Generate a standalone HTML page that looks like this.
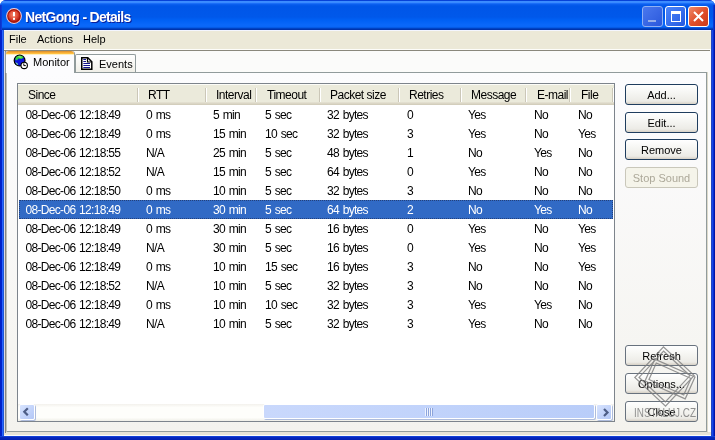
<!DOCTYPE html>
<html><head><meta charset="utf-8">
<style>
*{margin:0;padding:0;box-sizing:border-box}
html,body{width:715px;height:440px;overflow:hidden;-webkit-font-smoothing:antialiased;background:#fff;font-family:"Liberation Sans",sans-serif;font-size:11px;color:#000}
.a{position:absolute}
#frame{will-change:transform;position:absolute;left:0;top:0;width:715px;height:440px;background:#0831D9;border-radius:6px 6px 0 0;overflow:hidden}
#title{position:absolute;left:0;top:0;width:715px;height:30px;background:linear-gradient(to bottom,#0742d8 0px,#0742d8 0.8px,#3d8eff 1px,#3a8aff 2.5px,#1a6ef8 3.5px,#0a5eee 4.5px,#0056e8 6px,#0058ea 17px,#0060f4 20px,#0a68fa 25px,#0a66f6 27px,#0050d8 28px,#0036b0 29px,#0030a8 30px)}
#lb{position:absolute;left:0;top:30px;width:4px;height:410px;background:linear-gradient(to right,#0020c8 0,#0024cc 2px,#2664ff 2px,#2664ff 3px,#2058d8 3px)}
#lbt{position:absolute;left:0;top:5px;width:2px;height:25px;background:linear-gradient(to right,#0a2ec8,#1040dc)}
#rbt{position:absolute;left:713px;top:5px;width:2px;height:25px;background:linear-gradient(to right,#0a40e0,#0020b0)}
#rb{position:absolute;left:711px;top:30px;width:4px;height:410px;background:linear-gradient(to right,#2444c4 0,#2444c4 1px,#1848e4 1px,#1848e4 2px,#0a2ad0 2px,#0a2ad0 3px,#0014a8 3px)}
#bb{position:absolute;left:0;top:436px;width:715px;height:4px;background:linear-gradient(to bottom,#1040d8 0,#1040d8 1px,#0628c0 1px,#0020b0 4px)}
#client{position:absolute;left:4px;top:30px;width:707px;height:406px;background:#fbfbfa}
#menu{position:absolute;left:0;top:0;width:707px;height:20px;background:#ECE9D8;border-top:1px solid #f4f6ff;border-bottom:1px solid #fdfdfa}
#menu span{position:absolute;top:2px}
#sep{position:absolute;left:0;top:20px;width:706px;height:1px;background:#8a887c}
.ttl{position:absolute;left:25px;top:9px;color:#fff;font-weight:bold;font-size:14px;letter-spacing:-0.7px;text-shadow:1px 1px 0 #0a1f9a;white-space:nowrap}
.tb{position:absolute;top:6px;width:21px;height:21px;border:1px solid #fff;border-radius:3px}
#panel{position:absolute;left:1px;top:42px;width:702px;height:360px;border:1px solid #919B9C;background:linear-gradient(to bottom,#fcfcfe 0%,#f4f3ee 100%)}
#list{position:absolute;left:13px;top:53px;width:598px;height:339px;border:1px solid #7d848c;background:#fff;overflow:hidden}
#hdr{position:absolute;left:0;top:0;width:596px;height:21px;background:linear-gradient(to bottom,#fcfcf8 0,#fcfcf8 1px,#ebeadb 1px,#ebeadb 18px,#e6e3d4 18px,#dfdbcb 19px,#d6d1c0 20px,#d0cbb8 21px)}
.hs{position:absolute;top:4px;height:14px;width:1px;background:#cbc7b8;box-shadow:1px 0 0 #fff}
.ht{position:absolute;top:4px;white-space:nowrap;font-size:12px;letter-spacing:-0.5px}
.row{position:absolute;left:1px;width:594px;height:19px}
.row span{position:absolute;top:3px;white-space:nowrap;font-size:12px;letter-spacing:-0.68px;word-spacing:1px}
.sel{background:#316AC5;color:#fff;outline:1px dotted #24407a;outline-offset:-1px}
.btn{position:absolute;width:73px;height:21px;border:1px solid #1f3d5e;border-radius:3px;background:linear-gradient(to bottom,#fff 0,#f6f6f3 40%,#ecebe6 85%,#d6d0c5 100%);text-align:center;line-height:19px;padding-top:1px;white-space:nowrap}
.sba{width:16px;height:16px;border:1px solid #fff;border-radius:2px;box-shadow:1px 1px 0 #aebcdc;background:linear-gradient(135deg,#d8e4fe,#c1d2fa 60%,#b4c8f6)}
.sbth{height:15px;top:1px;border:1px solid #fff;border-radius:2px;background:linear-gradient(to right,#c9d8fc,#c1d3fb 50%,#b9cdf9)}
.gb{border-color:#68727e}
.dis{border-color:#c9c7ba;color:#aca899;background:#f5f4ea}
</style></head><body>
<div id="frame">
 <div id="title">
  <svg class="a" style="left:6px;top:8px" width="16" height="16" viewBox="0 0 16 16">
   <defs><radialGradient id="rg" cx="0.45" cy="0.4" r="0.6"><stop offset="0" stop-color="#f58a70"/><stop offset="0.6" stop-color="#e04a34"/><stop offset="1" stop-color="#b01a10"/></radialGradient></defs>
   <circle cx="8" cy="8" r="7.9" fill="#f0d0da"/>
   <circle cx="8" cy="8" r="6.9" fill="#a81408"/>
   <circle cx="8" cy="8" r="5.8" fill="url(#rg)"/>
   <rect x="7" y="4" width="2" height="4.3" fill="#fff"/>
   <rect x="7" y="9.8" width="2" height="2" fill="#fff"/>
  </svg>
  <div class="ttl">NetGong - Details</div>
  <div class="tb" style="left:642px;border-color:#8fb0f4;background:linear-gradient(135deg,#4a78ee,#2a58dc)"><div class="a" style="left:5px;top:13px;width:8px;height:2px;background:#98b0e8"></div></div>
  <div class="tb" style="left:665px;background:linear-gradient(135deg,#4c86fa,#2458e0)"><div class="a" style="left:5px;top:4px;width:10px;height:11px;border:1px solid #fff;border-top-width:3px"></div></div>
  <div class="tb" style="left:688px;background:linear-gradient(135deg,#ef8a6a,#e0502c 50%,#cc3a18)">
   <svg class="a" style="left:3px;top:3px" width="13" height="13" viewBox="0 0 13 13"><path d="M2 2L11 11M11 2L2 11" stroke="#fff" stroke-width="2"/></svg>
  </div>
 </div>
 <div id="lb"></div><div id="rb"></div><div id="bb"></div><div id="lbt"></div><div id="rbt"></div>
 <div id="client">
  <div id="menu"><span style="left:5px">File</span><span style="left:33px">Actions</span><span style="left:79px">Help</span></div>
  <div id="sep"></div>
  <div id="panel"></div>
  <div class="a" style="left:0;top:402px;width:707px;height:3px;background:#e6e3d7"></div>
  <div class="a" style="left:703px;top:42px;width:1px;height:361px;background:#dcd9ca"></div>
  <div class="a" style="left:0;top:21px;width:1px;height:382px;background:#dcdce6"></div>
  <div class="a" style="left:1px;top:21px;width:1px;height:382px;background:#858580"></div>
  <div class="a" style="left:2px;top:43px;width:1px;height:359px;background:#c0c0b8"></div>
  <!-- tabs -->
  <div class="a" style="left:1px;top:21px;width:70px;height:22px;background:#fcfcfe;border:1px solid #919B9C;border-top:none;border-bottom:none;border-radius:3px 3px 0 0"></div>
  <div class="a" style="left:2px;top:21px;width:68px;height:4px;background:linear-gradient(to bottom,#d08a30 0,#f0a030 1px,#ffc040 2.5px,#fff0c0 3px,#fff0c0 4px);border-radius:3px 3px 0 0"></div>
  <svg class="a" style="left:9px;top:24px" width="16" height="16" viewBox="0 0 16 16">
   <circle cx="6.6" cy="6.6" r="5.4" fill="#0c14dc" stroke="#000" stroke-width="1.2"/>
   <path d="M2.2 5.2 Q3 2 6.5 1.6 Q9.5 1.6 10.6 3.6 L8.5 5 L5.5 4.6 L3.8 6.4Z" fill="#30d040"/>
   <path d="M4.5 2.6 Q7 1.9 9 3 L7.2 3.8Z" fill="#9af070"/>
   <path d="M2.4 8 L4.8 9.4 L5.2 11.6 Q3 10.8 2.4 8Z" fill="#70c8a8"/>
   <circle cx="11.2" cy="11.4" r="3.2" fill="#fff" stroke="#000" stroke-width="1.1"/>
   <path d="M10.8 9.4 V11.6 H12.8" stroke="#000" stroke-width="1" fill="none"/>
  </svg>
  <span class="a" style="left:29px;top:26px">Monitor</span>
  <div class="a" style="left:71px;top:24px;width:61px;height:18px;background:linear-gradient(to bottom,#fff,#f0efe8);border:1px solid #919B9C;border-bottom:none;border-radius:2px 2px 0 0"></div>
  <svg class="a" style="left:77px;top:27px" width="12" height="14" viewBox="0 0 12 14">
   <path d="M0.75 0.75H6.8L10.8 4.8V12.25H0.75Z" fill="#fff" stroke="#000" stroke-width="1.5"/>
   <path d="M6.5 1V5H10.5" fill="none" stroke="#000" stroke-width="1.2"/>
   <path d="M2.3 2.5H5M2.3 4.5H5M2.3 6.5H9M2.3 8.5H9M2.3 10.5H9" stroke="#14148c" stroke-width="1.1"/>
  </svg>
  <span class="a" style="left:95px;top:28px">Events</span>
  <!-- list -->
  <div id="list">
   <div id="hdr">
    <span class="ht" style="left:10px">Since</span><div class="hs" style="left:119px"></div>
    <span class="ht" style="left:130px">RTT</span><div class="hs" style="left:187px"></div>
    <span class="ht" style="left:198px">Interval</span><div class="hs" style="left:237px"></div>
    <span class="ht" style="left:249px">Timeout</span><div class="hs" style="left:301px"></div>
    <span class="ht" style="left:312px">Packet size</span><div class="hs" style="left:380px"></div>
    <span class="ht" style="left:391px">Retries</span><div class="hs" style="left:442px"></div>
    <span class="ht" style="left:453px">Message</span><div class="hs" style="left:507px"></div>
    <span class="ht" style="left:519px">E-mail</span><div class="hs" style="left:551px"></div>
    <span class="ht" style="left:563px">File</span><div class="hs" style="left:594px"></div>
   </div>
   <div class="row" style="top:21px"><span style="left:6.5px">08-Dec-06 12:18:49</span><span style="left:127px">0 ms</span><span style="left:194px">5 min</span><span style="left:246px">5 sec</span><span style="left:308px">32 bytes</span><span style="left:388px">0</span><span style="left:449px">Yes</span><span style="left:515px">No</span><span style="left:559px">No</span></div>
   <div class="row" style="top:40px"><span style="left:6.5px">08-Dec-06 12:18:49</span><span style="left:127px">0 ms</span><span style="left:194px">15 min</span><span style="left:246px">10 sec</span><span style="left:308px">32 bytes</span><span style="left:388px">3</span><span style="left:449px">Yes</span><span style="left:515px">No</span><span style="left:559px">Yes</span></div>
   <div class="row" style="top:59px"><span style="left:6.5px">08-Dec-06 12:18:55</span><span style="left:127px">N/A</span><span style="left:194px">25 min</span><span style="left:246px">5 sec</span><span style="left:308px">48 bytes</span><span style="left:388px">1</span><span style="left:449px">No</span><span style="left:515px">Yes</span><span style="left:559px">No</span></div>
   <div class="row" style="top:78px"><span style="left:6.5px">08-Dec-06 12:18:52</span><span style="left:127px">N/A</span><span style="left:194px">15 min</span><span style="left:246px">5 sec</span><span style="left:308px">64 bytes</span><span style="left:388px">0</span><span style="left:449px">Yes</span><span style="left:515px">No</span><span style="left:559px">No</span></div>
   <div class="row" style="top:97px"><span style="left:6.5px">08-Dec-06 12:18:50</span><span style="left:127px">0 ms</span><span style="left:194px">10 min</span><span style="left:246px">5 sec</span><span style="left:308px">32 bytes</span><span style="left:388px">3</span><span style="left:449px">No</span><span style="left:515px">No</span><span style="left:559px">No</span></div>
   <div class="row sel" style="top:116px"><span style="left:6.5px">08-Dec-06 12:18:49</span><span style="left:127px">0 ms</span><span style="left:194px">30 min</span><span style="left:246px">5 sec</span><span style="left:308px">64 bytes</span><span style="left:388px">2</span><span style="left:449px">No</span><span style="left:515px">Yes</span><span style="left:559px">No</span></div>
   <div class="row" style="top:135px"><span style="left:6.5px">08-Dec-06 12:18:49</span><span style="left:127px">0 ms</span><span style="left:194px">30 min</span><span style="left:246px">5 sec</span><span style="left:308px">16 bytes</span><span style="left:388px">0</span><span style="left:449px">Yes</span><span style="left:515px">No</span><span style="left:559px">Yes</span></div>
   <div class="row" style="top:154px"><span style="left:6.5px">08-Dec-06 12:18:49</span><span style="left:127px">N/A</span><span style="left:194px">30 min</span><span style="left:246px">5 sec</span><span style="left:308px">16 bytes</span><span style="left:388px">0</span><span style="left:449px">Yes</span><span style="left:515px">No</span><span style="left:559px">Yes</span></div>
   <div class="row" style="top:173px"><span style="left:6.5px">08-Dec-06 12:18:49</span><span style="left:127px">0 ms</span><span style="left:194px">10 min</span><span style="left:246px">15 sec</span><span style="left:308px">16 bytes</span><span style="left:388px">3</span><span style="left:449px">No</span><span style="left:515px">No</span><span style="left:559px">Yes</span></div>
   <div class="row" style="top:192px"><span style="left:6.5px">08-Dec-06 12:18:52</span><span style="left:127px">N/A</span><span style="left:194px">10 min</span><span style="left:246px">5 sec</span><span style="left:308px">32 bytes</span><span style="left:388px">3</span><span style="left:449px">No</span><span style="left:515px">No</span><span style="left:559px">No</span></div>
   <div class="row" style="top:211px"><span style="left:6.5px">08-Dec-06 12:18:49</span><span style="left:127px">0 ms</span><span style="left:194px">10 min</span><span style="left:246px">10 sec</span><span style="left:308px">32 bytes</span><span style="left:388px">3</span><span style="left:449px">Yes</span><span style="left:515px">Yes</span><span style="left:559px">No</span></div>
   <div class="row" style="top:230px"><span style="left:6.5px">08-Dec-06 12:18:49</span><span style="left:127px">N/A</span><span style="left:194px">10 min</span><span style="left:246px">5 sec</span><span style="left:308px">32 bytes</span><span style="left:388px">3</span><span style="left:449px">Yes</span><span style="left:515px">No</span><span style="left:559px">No</span></div>
   <!-- scrollbar -->
   <div class="a" style="left:0;top:320px;width:596px;height:17px;background:linear-gradient(to bottom,#f3f1ec,#fefefb 20%,#fefefb 80%,#f0efe8)">
    <div class="a sba" style="left:1px;top:0px"><svg class="a" style="left:2px;top:2px" width="9" height="9" viewBox="0 0 9 9"><path d="M5.8 1.3L2.3 4.8L5.8 8.3" stroke="#4d5d86" stroke-width="2.2" fill="none"/></svg></div>
    <div class="a sbth" style="left:245px;top:0px;width:332px;box-shadow:1px 1px 0 #aebcdc"><div class="a" style="left:161px;top:3px;width:8px;height:8px;background:repeating-linear-gradient(to right,#eef3fe 0,#eef3fe 1px,#8ca4dc 1px,#8ca4dc 2px)"></div></div>
    <div class="a sba" style="left:578px;top:0px"><svg class="a" style="left:4px;top:3px" width="9" height="9" viewBox="0 0 9 9"><path d="M3 1L6.5 4.5L3 8" stroke="#4d5d86" stroke-width="2.2" fill="none"/></svg></div>
   </div>
  </div>
  <div class="btn" style="left:621px;top:54px">Add...</div>
  <div class="btn" style="left:621px;top:82px">Edit...</div>
  <div class="btn" style="left:621px;top:109px">Remove</div>
  <div class="btn dis" style="left:621px;top:137px">Stop Sound</div>
  <div class="btn gb" style="left:621px;top:315px">Refresh</div>
  <div class="btn gb" style="left:621px;top:343px">Options...</div>
  <div class="btn gb" style="left:621px;top:371px">Close</div>
 </div>
</div>
<svg class="a" style="left:0;top:0" width="715" height="440" viewBox="0 0 715 440">
  <g fill="none" stroke-linejoin="miter">
   <g stroke="#7c7c7c" stroke-width="1.2" opacity="0.8">
    <rect x="-21" y="-21" width="42" height="42" transform="translate(664.5 376.5) rotate(43)"/>
    <rect x="-18" y="-18" width="36" height="36" transform="translate(664.5 376.5) rotate(43)"/>
    <rect x="-22" y="-12" width="44" height="24" transform="translate(670 379) rotate(24)"/>
    <rect x="-19" y="-9" width="38" height="18" transform="translate(670 379) rotate(24)"/>
   </g>
  </g>
  <text x="634" y="417" font-family="Liberation Sans" font-size="13" fill="#858585" opacity="0.9" textLength="62" lengthAdjust="spacingAndGlyphs">INSTALUJ.CZ</text>
 </svg>
</body></html>
